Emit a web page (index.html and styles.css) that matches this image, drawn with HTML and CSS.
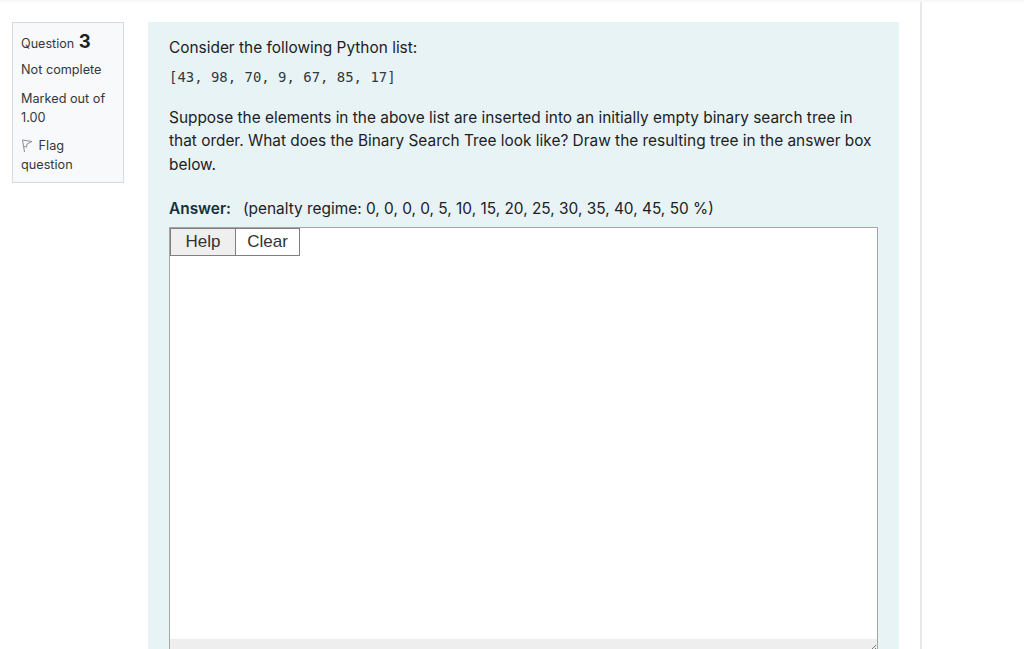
FILE: index.html
```html
<!DOCTYPE html>
<html lang="en">
<head>
  <meta charset="UTF-8" />
  <title>Question 3</title>
  <link rel="stylesheet" href="styles.css">
</head>
<body>
  <div class="page">
    <div class="question">
      <div class="info">
        <div class="qno">Question <span class="num">3</span></div>
        <div class="state">Not complete</div>
        <div class="grade">Marked out of 1.00</div>
        <div class="flag">
          <svg class="flag-icon" width="12" height="14" viewBox="0 0 12 14"><path d="M1.5 1 L3.5 13 M1.5 1 L11 2.5 L6 5 L5.5 8 L2.6 7.5" fill="none" stroke="#8a8f94" stroke-width="1"/></svg>
          Flag question
        </div>
      </div>
      <div class="content">
        <p class="intro">Consider the following Python list:</p>
        <pre class="code">[43, 98, 70, 9, 67, 85, 17]</pre>
        <p class="text">Suppose the elements in the above list are inserted into an initially empty binary search tree in that order. What does the Binary Search Tree look like? Draw the resulting tree in the answer box below.</p>
        <div class="answer-label"><b>Answer:</b><span>(penalty regime: 0, 0, 0, 0, 5, 10, 15, 20, 25, 30, 35, 40, 45, 50 %)</span></div>
        <div class="editor">
          <div class="toolbar">
            <button class="btn btn-help">Help</button><button class="btn btn-clear">Clear</button>
          </div>
          <div class="canvas"></div>
          <div class="statusbar">
            <svg class="grip" width="8" height="8" viewBox="0 0 8 8"><path d="M7 1 L1 7 M7 4 L4 7" fill="none" stroke="#777" stroke-width="1"/></svg>
          </div>
        </div>
      </div>
    </div>
  </div>
</body>
</html>
```

FILE: styles.css
```css
html, body { margin: 0; height: 649px; overflow: hidden; background: #fff; }
body { font-family: 'Inter', 'Liberation Sans', sans-serif; color: #1d2125; border-top: 2px solid #f7f7f7; box-sizing: border-box; }
.page { width: 922px; height: 647px; overflow: hidden; box-sizing: border-box; border-right: 2px solid #e8e8e8; padding: 20px 0 0 12px; }
.question { display: flex; gap: 24px; align-items: flex-start; }
.info { width: 112px; height: 161px; box-sizing: border-box; flex: none; background: #f8f9fa; border: 1px solid #d3dae1; padding: 7px 8px; font-size: 12.7px; line-height: 19.5px; color: #33383d; }
.qno { font-size: 12.6px; line-height: 22px; margin-bottom: 5px; }
.num { font-size: 18.5px; font-weight: 700; color: #1d2125; margin-left: 1px; }
.state { margin-bottom: 9px; }
.grade { margin-bottom: 8px; }
.flag-icon { vertical-align: -3px; margin-right: 2px; }
.content { width: 751px; height: 640px; box-sizing: border-box; flex: none; background: #e7f3f5; padding: 14px 21px 0; font-size: 15.42px; line-height: 23.5px; color: #1d2125; }
.intro { margin: 0; }
.code { margin: 6px 0 0; font-family: 'DejaVu Sans Mono', 'Liberation Mono', monospace; font-size: 13.95px; line-height: 23px; color: #33383d; }
.text { margin: 17px 0 0; }
.answer-label { margin-top: 21px; display: flex; gap: 12px; }
.answer-label b { font-weight: 600; color: #14303a; }
.editor { margin-top: 6px; width: 709px; box-sizing: border-box; height: 500px; border: 1px solid #a6a6a6; background: #fff; display: flex; flex-direction: column; }
.toolbar { display: flex; flex: none; }
.btn { font-family: 'Liberation Sans', sans-serif; font-size: 17px; height: 28px; border: 1px solid #7f7f7f; padding: 0; color: #333; background: #fff; margin: 0; }
.btn-help { width: 66px; background: #efefef; }
.btn-clear { width: 64px; border-left: 0; }
.canvas { height: 383px; flex: none; }
.statusbar { height: 87px; flex: none; background: #eeeeee; display: flex; justify-content: flex-end; align-items: flex-start; }
.grip { margin-top: 5px; }
```
